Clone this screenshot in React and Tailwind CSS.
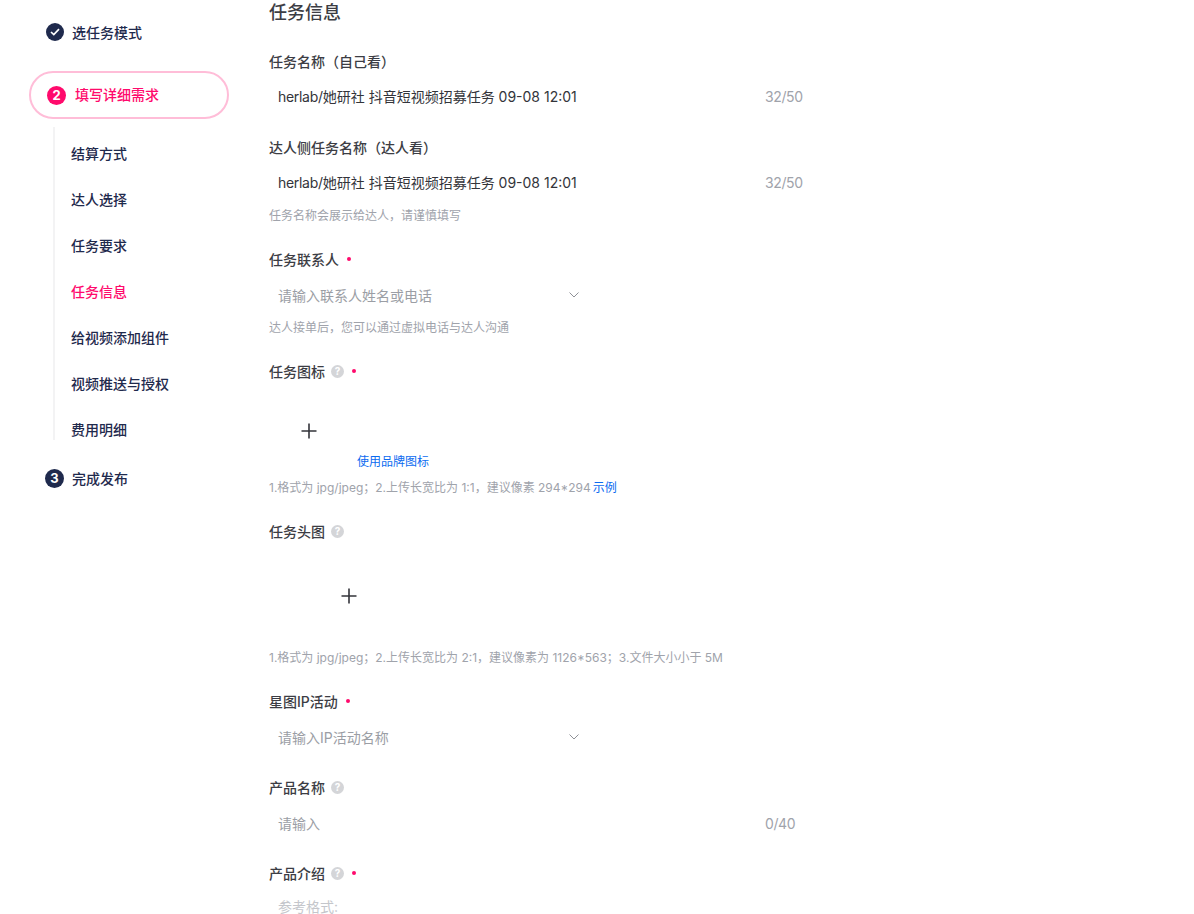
import React from "react";

const navItems = ["结算方式", "达人选择", "任务要求", "任务信息", "给视频添加组件", "视频推送与授权", "费用明细"];

const fontFamily = "font-['Inter','Noto_Sans_CJK_SC',sans-serif]";

function Help() {
  return (
    <span className="ml-[6px] flex h-[13px] w-[13px] items-center justify-center rounded-full bg-[#d4d5d8] text-[10px] font-bold leading-none text-white">
      ?
    </span>
  );
}

function Dot({ className = "ml-[8px]" }) {
  return <span className={`h-[4px] w-[4px] rounded-full bg-[#ff0a6c] ${className}`} />;
}

function Label({ children, help, required, className = "" }) {
  return (
    <div className={`flex h-[22px] items-center text-[14px] font-medium text-[#3c3d44] ${className}`}>
      <span>{children}</span>
      {help && <Help />}
      {required && <Dot />}
    </div>
  );
}

function TextInput({ children, muted, count, className = "" }) {
  return (
    <div className={`flex h-[36px] w-[544px] items-center pl-[9px] text-[14px] ${className}`}>
      <div className={`min-w-0 flex-1 ${muted ? "text-[#9b9ea5]" : "text-[#33343a]"}`}>{children}</div>
      <span className="w-[48px] tracking-[-0.4px] text-[#a0a3ab]">{count}</span>
    </div>
  );
}

function SelectInput({ placeholder, className = "" }) {
  return (
    <div className={`flex h-[36px] w-[310px] items-center justify-between pl-[9px] text-[14px] text-[#9b9ea5] ${className}`}>
      <span>{placeholder}</span>
      <svg width="10" height="6" viewBox="0 0 10 6" fill="none" stroke="#8f9197" strokeWidth="1">
        <path d="M0.5 0.5 5 5 9.5 0.5" />
      </svg>
    </div>
  );
}

function Hint({ children, className = "" }) {
  return <div className={`flex h-[20px] items-center text-[12px] text-[#a0a3ab] ${className}`}>{children}</div>;
}

function PlusIcon() {
  return (
    <svg width="16" height="16" viewBox="0 0 16 16" stroke="#33343a" strokeWidth="1.6">
      <path d="M8 0.5v15M0.5 8h15" />
    </svg>
  );
}

function TaskName() {
  return (
    <>
      <span className="tracking-[-0.3px]">herlab/</span>她研社 抖音短视频招募任务 09-08 12:01
    </>
  );
}

function Sidebar() {
  return (
    <aside className="w-[269px] shrink-0 pl-[29px]">
      <div className="mt-[22px] ml-[17px] flex h-[20px] items-center text-[14px] font-medium text-[#1f2a4d]">
        <span className="flex h-[18px] w-[18px] items-center justify-center rounded-full bg-[#1f2a4d]">
          <svg width="10" height="8" viewBox="0 0 10 8" fill="none" stroke="#fff" strokeWidth="1.7">
            <path d="M1 4 3.8 6.6 9 1.2" />
          </svg>
        </span>
        <span className="ml-[8px]">选任务模式</span>
      </div>

      <div className="mt-[29px] flex h-[48px] w-[200px] items-center rounded-full border-2 border-[#ffbdd8] pl-[16px] text-[14px] font-medium text-[#ff0a6c]">
        <span className="flex h-[19px] w-[19px] items-center justify-center rounded-full bg-[#ff0a6c] text-[13px] font-bold leading-none text-white">
          2
        </span>
        <span className="ml-[9px] pb-[2px]">填写详细需求</span>
      </div>

      <ul className="mt-[8px] ml-[24px] h-[313px] border-l-2 border-[#f3f3f4] pt-[3px] pl-[16px]">
        {navItems.map((item) => (
          <li
            key={item}
            className={`flex h-[46px] items-center text-[14px] font-medium ${
              item === "任务信息" ? "text-[#ff0a6c]" : "text-[#1f2a4d]"
            }`}
          >
            {item}
          </li>
        ))}
      </ul>

      <div className="mt-[28px] ml-[16px] flex h-[20px] items-center text-[14px] font-medium text-[#1f2a4d]">
        <span className="flex h-[19px] w-[19px] items-center justify-center rounded-full bg-[#1f2a4d] text-[13px] font-bold leading-none text-white">
          3
        </span>
        <span className="ml-[8px]">完成发布</span>
      </div>
    </aside>
  );
}

export default function App() {
  return (
    <div className={`flex h-[914px] overflow-hidden bg-white ${fontFamily}`}>
      <Sidebar />
      <main className="flex-1">
        <h2 className="flex h-[24px] items-center text-[18px] font-medium text-[#3c3d44]">任务信息</h2>

        <Label className="mt-[26px]">任务名称（自己看）</Label>
        <TextInput className="mt-[6px]" count="32/50">
          <TaskName />
        </TextInput>

        <Label className="mt-[22px]">达人侧任务名称（达人看）</Label>
        <TextInput className="mt-[6px]" count="32/50">
          <TaskName />
        </TextInput>
        <Hint className="mt-[6px]">任务名称会展示给达人，请谨慎填写</Hint>

        <Label className="mt-[22px]" required>
          任务联系人
        </Label>
        <SelectInput className="mt-[7px]" placeholder="请输入联系人姓名或电话" />
        <Hint className="mt-[5px]">达人接单后，您可以通过虚拟电话与达人沟通</Hint>

        <Label className="mt-[22px]" help required>
          任务图标
        </Label>
        <div className="mt-[9px] flex items-end">
          <div className="flex h-[80px] w-[80px] items-center justify-center">
            <PlusIcon />
          </div>
          <a className="ml-[8px] flex h-[18px] items-center text-[12px] text-[#0b6bf0]">使用品牌图标</a>
        </div>
        <Hint className="mt-[7px]">
          1.格式为 jpg/jpeg；2.上传长宽比为 1:1，建议像素 294*294
          <a className="ml-[2px] text-[#0b6bf0]">示例</a>
        </Hint>

        <Label className="mt-[22px]" help>
          任务头图
        </Label>
        <div className="mt-[14px] flex h-[80px] w-[160px] items-center justify-center">
          <PlusIcon />
        </div>
        <Hint className="mt-[12px]">1.格式为 jpg/jpeg；2.上传长宽比为 2:1，建议像素为 1126*563；3.文件大小小于 5M</Hint>

        <Label className="mt-[22px]" required>
          星图IP活动
        </Label>
        <SelectInput className="mt-[7px]" placeholder="请输入IP活动名称" />

        <Label className="mt-[21px]" help>
          产品名称
        </Label>
        <TextInput className="mt-[7px]" muted count="0/40">
          请输入
        </TextInput>

        <Label className="mt-[21px]" help required>
          产品介绍
        </Label>
        <div className="mt-[17px] pl-[9px] text-[14px] leading-[12px] text-[#c4c6cb]">参考格式:</div>
      </main>
    </div>
  );
}
